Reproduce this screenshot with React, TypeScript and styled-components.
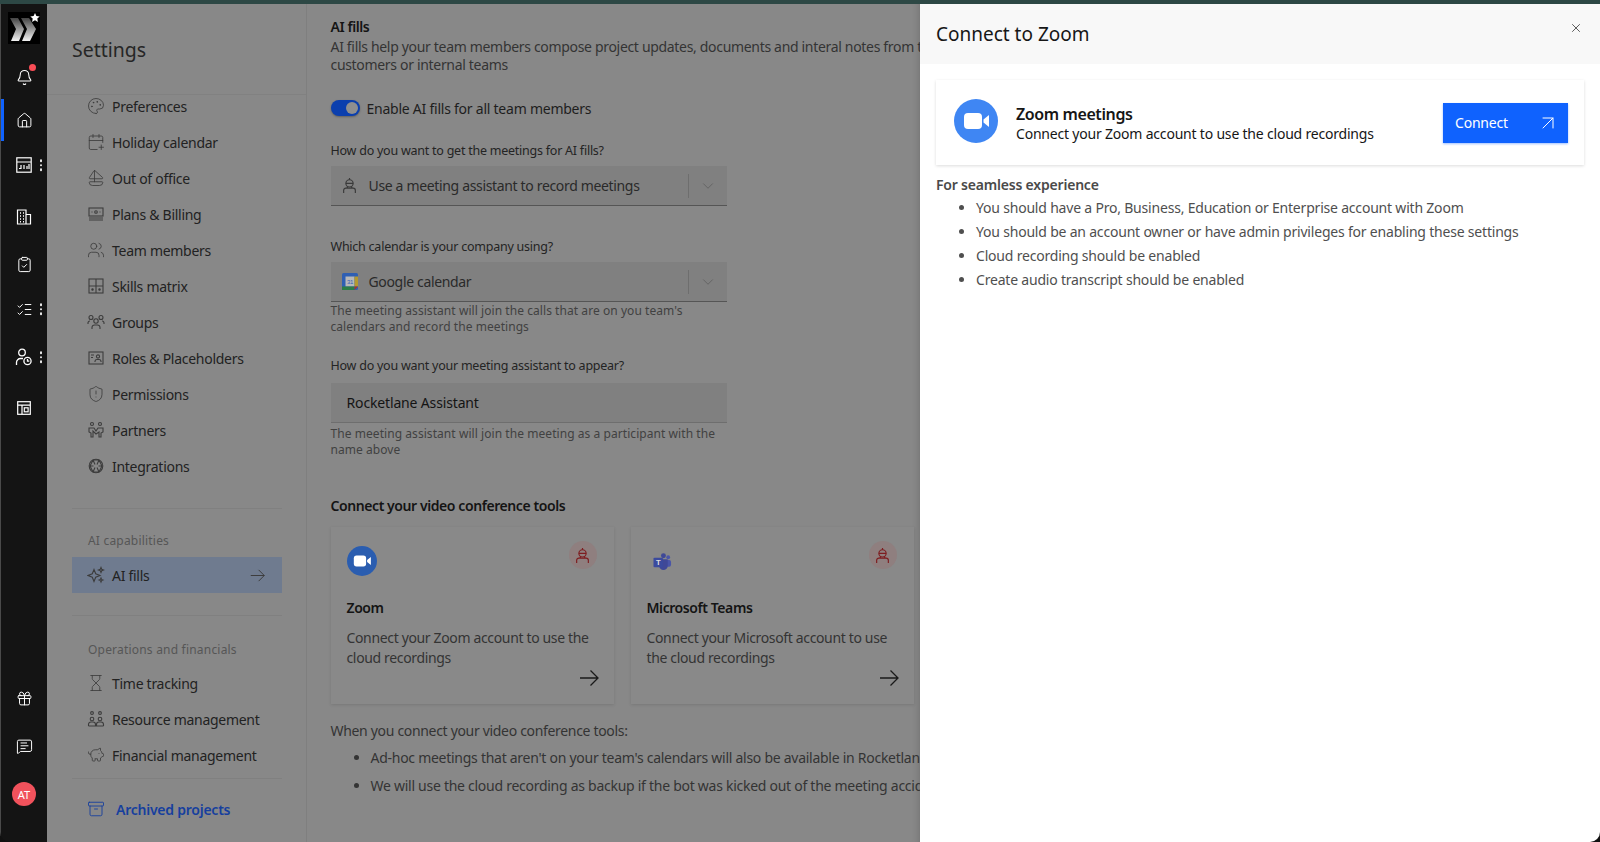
import styled, { createGlobalStyle } from 'styled-components'
import {
	Archive,
	ArrowUpRight,
	Bell,
	CalendarPlus,
	ChevronDown,
	ClipboardCheck,
	Gift,
	Hourglass,
	Home,
	ListChecks,
	MessageSquareText,
	Palette,
	PiggyBank,
	Sailboat,
	ShieldAlert,
	Users,
	X,
} from 'lucide-react'
import type { ReactNode } from 'react'

const GlobalStyle = createGlobalStyle`
	html, body {
		margin: 0;
		padding: 0;
		background: #111;
	}
	* {
		box-sizing: border-box;
	}
`

const Page = styled.div`
	width: 1600px;
	height: 842px;
	display: flex;
	flex-direction: column;
	overflow: hidden;
	border-radius: 0 0 10px 10px;
	font-family: 'Noto Sans', 'Liberation Sans', sans-serif;
	color: #1c1c1c;
`

const TopBand = styled.div`
	height: 4px;
	flex: none;
	background: #2d4845;
`

const Main = styled.div`
	flex: 1;
	display: flex;
	min-height: 0;
`

const Rail = styled.nav`
	width: 47px;
	flex: none;
	display: flex;
	flex-direction: column;
	background: #141414;
	border-left: 1px solid #4a4a4a;
	color: #fff;
`

const LogoBox = styled.div`
	height: 51px;
	padding: 8px 0 0 7px;
	flex: none;
`

const RailItem = styled.div<{ $h: number; $active?: boolean }>`
	position: relative;
	height: ${p => p.$h}px;
	flex: none;
	display: flex;
	align-items: center;
	justify-content: center;
	${p => p.$active && 'box-shadow: inset 3px 0 0 #0f62fe;'}
`

const RailBottom = styled.div`
	margin-top: auto;
	padding-bottom: 24px;
	display: flex;
	flex-direction: column;
`

const Kebab = styled.span`
	position: absolute;
	right: 5px;
	top: 50%;
	transform: translateY(-50%);
	display: flex;
	flex-direction: column;
	gap: 2px;

	i {
		width: 2.5px;
		height: 2.5px;
		border-radius: 50%;
		background: #eee;
	}
`

const RedDot = styled.span`
	position: absolute;
	top: 9px;
	left: 28px;
	width: 7px;
	height: 7px;
	border-radius: 50%;
	background: #fa4d56;
`

const Avatar = styled.div`
	width: 24px;
	height: 24px;
	border-radius: 50%;
	background: #f1525c;
	color: #fff;
	font-size: 11px;
	display: flex;
	align-items: center;
	justify-content: center;
`

const Sidebar = styled.aside`
	width: 260px;
	flex: none;
	display: flex;
	flex-direction: column;
	background: #888;
	border-right: 1px solid #7f7f7f;
	overflow: hidden;
`

const SidebarHeader = styled.div`
	position: relative;
	z-index: 1;
	height: 91px;
	flex: none;
	padding: 34px 0 0 25px;
	font-size: 19.5px;
	line-height: 24px;
	color: #262626;
	border-bottom: 1px solid #818181;
`

const NavList = styled.div`
	margin-top: -7px;
	display: flex;
	flex-direction: column;
`

const NavRow = styled.div<{ $active?: boolean }>`
	height: 36px;
	flex: none;
	margin: 0 24px 0 25px;
	padding: 0 17px 0 15px;
	display: flex;
	align-items: center;
	gap: 7px;
	font-size: 14px;
	letter-spacing: -0.28px;
	white-space: nowrap;
	color: #222;
	background: ${p => (p.$active ? '#6f7b8f' : 'transparent')};

	svg {
		flex: none;
		color: #3c3c3c;
	}
`

const NavArrow = styled.span`
	margin-left: auto;
	display: flex;
`

const SideDivider = styled.div<{ $top: number }>`
	height: 1px;
	flex: none;
	margin: ${p => p.$top}px 24px 0 25px;
	background: #808080;
`

const SectionLabel = styled.div<{ $top: number }>`
	margin: ${p => p.$top}px 0 0 41px;
	font-size: 12px;
	line-height: 16px;
	letter-spacing: 0.2px;
	color: #565656;
`

const NavGroup = styled.div<{ $top: number }>`
	margin-top: ${p => p.$top}px;
	display: flex;
	flex-direction: column;
`

const ArchivedRow = styled(NavRow)`
	gap: 11px;
	font-weight: 600;
	letter-spacing: -0.24px;
	color: #163f9e;

	svg {
		color: #163f9e;
	}
`

const Content = styled.main`
	flex: 1;
	min-width: 0;
	padding: 14px 0 0 23.5px;
	background: #888;
	overflow: hidden;
	box-shadow: inset -8px 0 8px -8px rgba(0, 0, 0, 0.2);
`

const Strong = styled.div<{ $top?: number }>`
	margin-top: ${p => p.$top ?? 0}px;
	font-size: 14px;
	line-height: 18px;
	font-weight: 600;
	letter-spacing: -0.42px;
	color: #141414;
`

const Description = styled.p<{ $top?: number }>`
	margin: ${p => p.$top ?? 2}px 0 0;
	font-size: 14px;
	line-height: 18px;
	letter-spacing: -0.32px;
	white-space: nowrap;
	color: #343434;
`

const ToggleRow = styled.div`
	margin-top: 26px;
	height: 16px;
	display: flex;
	align-items: center;
	gap: 7px;
	font-size: 14px;
	letter-spacing: -0.24px;
	color: #1e1e1e;
`

const Toggle = styled.span`
	position: relative;
	width: 29px;
	height: 16px;
	border-radius: 8px;
	background: #0b3fae;
	box-shadow: 0 1px 2px rgba(0, 0, 0, 0.3);

	&::after {
		content: '';
		position: absolute;
		top: 2px;
		right: 2px;
		width: 12px;
		height: 12px;
		border-radius: 50%;
		background: #8f8f8f;
	}
`

const FieldLabel = styled.div<{ $top: number }>`
	margin-top: ${p => p.$top}px;
	font-size: 12.5px;
	line-height: 16px;
	letter-spacing: -0.24px;
	color: #242424;
`

const Select = styled.div`
	margin-top: 7px;
	width: 396px;
	height: 40px;
	padding: 0 10px 0 10px;
	display: flex;
	align-items: center;
	gap: 10px;
	background: #808080;
	border-bottom: 1px solid #555;
	font-size: 14px;
	letter-spacing: -0.34px;
	color: #2a2a2a;
`

const SelectIcon = styled.span`
	width: 18px;
	display: flex;
	justify-content: center;
	color: #3a3a3a;
`

const SelectRule = styled.span`
	margin-left: auto;
	width: 1px;
	height: 24px;
	background: #6e6e6e;
`

const SelectChevron = styled(ChevronDown)`
	color: #5f5f5f;
`

const TextInput = styled.div`
	margin-top: 9px;
	width: 396px;
	height: 40px;
	padding: 0 16px;
	display: flex;
	align-items: center;
	background: #808080;
	border-bottom: 1px solid #6e6e6e;
	font-size: 14px;
	letter-spacing: -0.15px;
	color: #141414;
`

const Helper = styled.p<{ $top: number }>`
	margin: ${p => p.$top}px 0 0;
	width: 396px;
	font-size: 12px;
	line-height: 16px;
	letter-spacing: 0.06px;
	color: #414141;
`

const CardRow = styled.div`
	margin-top: 12px;
	display: flex;
	gap: 17px;
`

const ToolCard = styled.div`
	position: relative;
	width: 283px;
	height: 177px;
	flex: none;
	padding: 19px 15px 16px 16px;
	display: flex;
	flex-direction: column;
	background: #898989;
	box-shadow: 0 1px 3px rgba(0, 0, 0, 0.12);
`

const ToolIcon = styled.div<{ $inset?: number }>`
	height: 30px;
	flex: none;
	padding-left: ${p => p.$inset ?? 0}px;
	display: flex;
	align-items: center;
`

const ToolBadge = styled.span`
	position: absolute;
	top: 14px;
	right: 17px;
	width: 28px;
	height: 28px;
	border-radius: 50%;
	background: #8f7f7f;
	color: #7e1d20;
	display: flex;
	align-items: center;
	justify-content: center;
`

const ToolDescription = styled.p`
	margin: 11px 0 0;
	font-size: 14px;
	line-height: 20px;
	letter-spacing: -0.35px;
	color: #343434;
`

const ToolArrowBox = styled.div`
	align-self: flex-end;
	flex: none;
	height: 20px;
	color: #1a1a1a;
`

const ClippedList = styled.ul`
	margin: 4px 0 0;
	padding: 0 0 0 40px;
	list-style: disc;
	font-size: 14px;
	line-height: 28px;
	letter-spacing: -0.27px;
	white-space: nowrap;
	color: #343434;
`

const Drawer = styled.section`
	width: 680px;
	flex: none;
	display: flex;
	flex-direction: column;
	background: #fff;
`

const DrawerHeader = styled.header`
	height: 60px;
	flex: none;
	padding: 0 16px;
	display: flex;
	align-items: center;
	justify-content: space-between;
	background: #f8f8f8;
	font-size: 19px;
	color: #161616;
`

const CloseIcon = styled(X)`
	margin: -12px 1px 0 0;
	color: #2a2a2a;
`

const DrawerBody = styled.div`
	padding: 16px;
`

const ZoomCard = styled.div`
	height: 85px;
	padding: 0 16px 0 18px;
	display: flex;
	align-items: center;
	gap: 18px;
	background: #fff;
	box-shadow: 0 1px 3px rgba(0, 0, 0, 0.14);
`

const ZoomCircle = styled.div`
	width: 44px;
	height: 44px;
	flex: none;
	margin-top: -3px;
`

const ZoomText = styled.div`
	flex: 1;
`

const ZoomTitle = styled.div`
	font-size: 16px;
	line-height: 22px;
	font-weight: 600;
	letter-spacing: -0.4px;
	color: #161616;
`

const ZoomSub = styled.div`
	font-size: 14px;
	line-height: 18px;
	letter-spacing: -0.2px;
	color: #161616;
`

const ConnectButton = styled.button`
	width: 125px;
	height: 40px;
	padding: 0 8px 0 12px;
	display: flex;
	align-items: center;
	justify-content: space-between;
	border: 0;
	background: #0f62fe;
	color: #fff;
	font-family: inherit;
	font-size: 14px;
	letter-spacing: -0.2px;
	box-shadow: 0 1px 2px rgba(15, 98, 254, 0.4);
`

const SeamlessTitle = styled.div`
	margin-top: 11px;
	font-size: 14px;
	line-height: 18px;
	font-weight: 600;
	letter-spacing: -0.2px;
	color: #4a4a4a;
`

const SeamlessList = styled.ul`
	margin: 2px 0 0;
	padding: 0 0 0 40px;
	list-style: disc;
	font-size: 14px;
	line-height: 24.1px;
	letter-spacing: -0.2px;
	color: #4f4f4f;
`

const Logo = () => (
	<svg width="32" height="32" viewBox="0 0 32 32">
		<defs>
			<linearGradient id="chev" x1="0" y1="0" x2="0" y2="1">
				<stop offset="0" stopColor="#444" />
				<stop offset="1" stopColor="#f2f2f2" />
			</linearGradient>
		</defs>
		<rect width="32" height="32" fill="#000" />
		<path d="M2 6h8l6 11-5 12H3l5-12z" fill="url(#chev)" />
		<path d="M13 6h8l7 11-6 12h-8l5-12z" fill="url(#chev)" />
		<path
			d="M27 1l1.4 3 3.3.4-2.4 2.2.6 3.3-2.9-1.6-2.9 1.6.6-3.3-2.4-2.2 3.3-.4z"
			fill="#fff"
		/>
	</svg>
)

const CalendarChart = () => (
	<svg width="16" height="16" viewBox="0 0 16 16" fill="none" stroke="#fff" strokeWidth="1.2">
		<rect x="0.8" y="0.8" width="14.4" height="14.4" />
		<path d="M1 5h14M5 8v3.5H3M8 8v4M11 9v3M13 7v5" />
	</svg>
)

const BuildingIcon = () => (
	<svg width="16" height="16" viewBox="0 0 16 16" fill="none" stroke="#fff" strokeWidth="1.2">
		<path d="M1.5 1H10v14H1.5zM10 5.5h4.5V15H10" />
		<path d="M4 4h1M7 4h1M4 7h1M7 7h1M4 10h1M7 10h1M4 12.8h1M7 12.8h1" strokeWidth="1.4" />
	</svg>
)

const PersonClock = () => (
	<svg width="18" height="18" viewBox="0 0 18 18" fill="none" stroke="#fff" strokeWidth="1.3">
		<circle cx="7" cy="4.5" r="3.3" />
		<path d="M1.5 17v-2.5a4 4 0 0 1 4-4H8" />
		<circle cx="12.5" cy="13" r="3.6" />
		<path d="M12.5 11v2.2h1.8" />
	</svg>
)

const LayoutIcon = () => (
	<svg width="14" height="14" viewBox="0 0 14 14" fill="none" stroke="#fff" strokeWidth="1.2">
		<rect x="0.7" y="0.7" width="12.6" height="12.6" />
		<path d="M0.7 4.2h12.6M5 4.2v9.1" />
		<rect x="7.3" y="6.8" width="3.8" height="4" />
	</svg>
)

const NavSvg = ({ children }: { children: ReactNode }) => (
	<svg width="18" height="18" viewBox="0 0 18 18" fill="none" stroke="currentColor" strokeWidth="1.1">
		{children}
	</svg>
)

const BotIcon = ({ size = 17 }: { size?: number }) => (
	<svg width={size} height={size} viewBox="0 0 16 16" fill="none" stroke="currentColor" strokeWidth="1.1">
		<circle cx="8" cy="6" r="3.4" />
		<path d="M8 1v1.6M4.6 6h6.8M2.5 15v-2.5a2 2 0 0 1 2-2h7a2 2 0 0 1 2 2V15M5.5 10.5l.8-1.8M10.5 10.5l-.8-1.8" />
	</svg>
)

const LongArrow = ({ width }: { width: number }) => (
	<svg width={width} height={width} viewBox="0 0 20 20" fill="none" stroke="currentColor" strokeWidth="1.3">
		<path d="M1 10h18M11.5 2.5 19 10l-7.5 7.5" />
	</svg>
)

const GoogleCalendar = () => (
	<svg width="16" height="17" viewBox="0 0 16 17">
		<rect width="16" height="17" rx="1.5" fill="#2f5fb3" />
		<rect x="3.5" y="3.5" width="9" height="10" fill="#b8b8b8" />
		<rect x="12.5" y="3.5" width="3.5" height="10" fill="#b59a2e" />
		<rect y="13.5" width="12.5" height="3.5" fill="#2c7d46" />
		<path d="M12.5 13.5H16L12.5 17z" fill="#a8342b" />
		<text x="8" y="11" fontSize="6" textAnchor="middle" fill="#2f5fb3" fontFamily="Liberation Sans, sans-serif">
			31
		</text>
	</svg>
)

const ZoomGlyph = ({ size, bg }: { size: number; bg: string }) => (
	<svg width={size} height={size} viewBox="0 0 44 44">
		<circle cx="22" cy="22" r="22" fill={bg} />
		<rect x="10" y="14" width="18" height="16" rx="4" fill="#fff" />
		<path d="M29.5 20.5 35 16v12l-5.5-4.5z" fill="#fff" />
	</svg>
)

const TeamsGlyph = () => (
	<svg width="19" height="19" viewBox="0 0 20 20">
		<circle cx="16" cy="5.5" r="2" fill="#4a55a8" />
		<circle cx="11" cy="4" r="2.6" fill="#3f4897" />
		<rect x="13" y="8.5" width="6" height="7" rx="2" fill="#4a55a8" />
		<path d="M6.5 7.5h9v7a4.5 4.5 0 0 1-9 0z" fill="#3f4897" />
		<rect x="0.5" y="6" width="10" height="10" rx="1" fill="#3b4a9e" />
		<text x="5.5" y="13.8" fontSize="8" fontWeight="700" textAnchor="middle" fill="#ddd" fontFamily="Liberation Sans, sans-serif">
			T
		</text>
	</svg>
)

const navIcon = { size: 18, strokeWidth: 1.1 }

const mainNav: { label: string; icon: ReactNode }[] = [
	{ label: 'Preferences', icon: <Palette {...navIcon} /> },
	{ label: 'Holiday calendar', icon: <CalendarPlus {...navIcon} /> },
	{ label: 'Out of office', icon: <Sailboat {...navIcon} /> },
	{
		label: 'Plans & Billing',
		icon: (
			<NavSvg>
				<rect x="2" y="3" width="14" height="8" />
				<circle cx="9" cy="7" r="1.3" />
				<path d="M4.5 7h1M12.5 7h1M2 13h14M2 15h14" />
			</NavSvg>
		),
	},
	{ label: 'Team members', icon: <Users {...navIcon} /> },
	{
		label: 'Skills matrix',
		icon: (
			<NavSvg>
				<rect x="2" y="2" width="14" height="14" />
				<path d="M9 2v14M2 9h14" />
				<circle cx="5.5" cy="12.5" r="0.7" fill="currentColor" />
				<circle cx="12.5" cy="12.5" r="0.7" fill="currentColor" />
			</NavSvg>
		),
	},
	{
		label: 'Groups',
		icon: (
			<NavSvg>
				<circle cx="4" cy="4.5" r="2" />
				<circle cx="14" cy="4.5" r="2" />
				<circle cx="9" cy="8" r="2.2" />
				<path d="M1 11v-1a2 2 0 0 1 2-2M17 11v-1a2 2 0 0 0-2-2M5 16v-1.5A2.5 2.5 0 0 1 7.500 12h3a2.500 2.500 0 0 1 2.500 2.500V16" />
			</NavSvg>
		),
	},
	{
		label: 'Roles & Placeholders',
		icon: (
			<NavSvg>
				<rect x="2" y="3" width="14" height="12" />
				<circle cx="11" cy="7.5" r="1.6" />
				<path d="M8 13v-.8a2 2 0 0 1 2-1.7h2a2 2 0 0 1 2 1.700V13M4 6h3M4 8.500h2" />
			</NavSvg>
		),
	},
	{ label: 'Permissions', icon: <ShieldAlert {...navIcon} /> },
	{
		label: 'Partners',
		icon: (
			<NavSvg>
				<circle cx="5" cy="3" r="1.5" />
				<circle cx="13" cy="3" r="1.5" />
				<path d="M2 7h5l2 3 2-3h5v4l-2 1v4h-2v-5L9 13l-3-3v6H4v-4l-2-1z" />
			</NavSvg>
		),
	},
	{
		label: 'Integrations',
		icon: (
			<NavSvg>
				<circle cx="9" cy="9" r="6.8" />
				<path d="M6 3 3 9l3 6h6l3-6-3-6zM3 9h3.5M11.5 9H15M6 3l2 4.5M12 3l-2 4.5M6 15l2-4.5M12 15l-2-4.5" />
			</NavSvg>
		),
	},
]

const opsNav: { label: string; icon: ReactNode }[] = [
	{ label: 'Time tracking', icon: <Hourglass {...navIcon} /> },
	{
		label: 'Resource management',
		icon: (
			<NavSvg>
				<circle cx="5" cy="3" r="1.4" />
				<circle cx="13" cy="3" r="1.4" />
				<circle cx="5" cy="9" r="1.8" />
				<circle cx="13" cy="9" r="1.8" />
				<path d="M1.5 16v-1.5A2.500 2.500 0 0 1 4 12h2a2.500 2.500 0 0 1 2.500 2.500V16M9.500 16v-1.500A2.500 2.500 0 0 1 12 12h2a2.500 2.500 0 0 1 2.500 2.500V16M1.500 16h15" />
			</NavSvg>
		),
	},
	{ label: 'Financial management', icon: <PiggyBank {...navIcon} /> },
]

const tools = [
	{
		name: 'Zoom',
		text: 'Connect your Zoom account to use the cloud recordings',
		icon: <ZoomGlyph size={30} bg="#2a5db0" />,
		inset: 0,
	},
	{
		name: 'Microsoft Teams',
		text: 'Connect your Microsoft account to use the cloud recordings',
		icon: <TeamsGlyph />,
		inset: 6,
	},
]

export default function App() {
	return (
		<Page>
			<GlobalStyle />
			<TopBand />
			<Main>
				<Rail>
					<LogoBox>
						<Logo />
					</LogoBox>
					<RailItem $h={44}>
						<Bell size={17} strokeWidth={1.5} />
						<RedDot />
					</RailItem>
					<RailItem $h={42} $active>
						<Home size={17} strokeWidth={1.4} />
					</RailItem>
					<RailItem $h={48}>
						<CalendarChart />
						<Kebab>
							<i />
							<i />
							<i />
						</Kebab>
					</RailItem>
					<RailItem $h={56}>
						<BuildingIcon />
					</RailItem>
					<RailItem $h={38}>
						<ClipboardCheck size={17} strokeWidth={1.4} />
					</RailItem>
					<RailItem $h={52}>
						<ListChecks size={17} strokeWidth={1.4} />
						<Kebab>
							<i />
							<i />
							<i />
						</Kebab>
					</RailItem>
					<RailItem $h={44}>
						<PersonClock />
						<Kebab>
							<i />
							<i />
							<i />
						</Kebab>
					</RailItem>
					<RailItem $h={58}>
						<LayoutIcon />
					</RailItem>
					<RailBottom>
						<RailItem $h={48}>
							<Gift size={17} strokeWidth={1.4} />
						</RailItem>
						<RailItem $h={48}>
							<MessageSquareText size={17} strokeWidth={1.4} />
						</RailItem>
						<RailItem $h={48}>
							<Avatar>AT</Avatar>
						</RailItem>
					</RailBottom>
				</Rail>

				<Sidebar>
					<SidebarHeader>Settings</SidebarHeader>
					<NavList>
						{mainNav.map(item => (
							<NavRow key={item.label}>
								{item.icon}
								{item.label}
							</NavRow>
						))}
					</NavList>
					<SideDivider $top={24} />
					<SectionLabel $top={24}>AI capabilities</SectionLabel>
					<NavGroup $top={8}>
						<NavRow $active>
							<NavSvg>
								<path d="M7 3.5l1.7 4.3 4.3 1.700-4.300 1.700L7 15.500l-1.700-4.300L1 9.500l4.300-1.700z" />
								<path d="M14 1.500l.7 1.800 1.800.7-1.800.7-.7 1.800-.7-1.800-1.800-.7 1.800-.7zM14 12l.6 1.400 1.400.6-1.400.6-.6 1.400-.6-1.400-1.400-.6 1.400-.6z" />
							</NavSvg>
							AI fills
							<NavArrow>
								<LongArrow width={15} />
							</NavArrow>
						</NavRow>
					</NavGroup>
					<SideDivider $top={22} />
					<SectionLabel $top={26}>Operations and financials</SectionLabel>
					<NavGroup $top={7}>
						{opsNav.map(item => (
							<NavRow key={item.label}>
								{item.icon}
								{item.label}
							</NavRow>
						))}
					</NavGroup>
					<SideDivider $top={5} />
					<NavGroup $top={12}>
						<ArchivedRow>
							<Archive size={18} strokeWidth={1.2} />
							Archived projects
						</ArchivedRow>
					</NavGroup>
				</Sidebar>

				<Content>
					<Strong>AI fills</Strong>
					<Description>
						AI fills help your team members compose project updates, documents and interal notes from the
						<br />
						customers or internal teams
					</Description>
					<ToggleRow>
						<Toggle />
						Enable AI fills for all team members
					</ToggleRow>
					<FieldLabel $top={27}>How do you want to get the meetings for AI fills?</FieldLabel>
					<Select>
						<SelectIcon>
							<BotIcon />
						</SelectIcon>
						Use a meeting assistant to record meetings
						<SelectRule />
						<SelectChevron size={18} strokeWidth={1.1} />
					</Select>
					<FieldLabel $top={33}>Which calendar is your company using?</FieldLabel>
					<Select>
						<SelectIcon>
							<GoogleCalendar />
						</SelectIcon>
						Google calendar
						<SelectRule />
						<SelectChevron size={18} strokeWidth={1.1} />
					</Select>
					<Helper $top={1}>
						The meeting assistant will join the calls that are on you team's calendars and record the meetings
					</Helper>
					<FieldLabel $top={23}>How do you want your meeting assistant to appear?</FieldLabel>
					<TextInput>Rocketlane Assistant</TextInput>
					<Helper $top={3}>
						The meeting assistant will join the meeting as a participant with the name above
					</Helper>
					<Strong $top={39}>Connect your video conference tools</Strong>
					<CardRow>
						{tools.map(tool => (
							<ToolCard key={tool.name}>
								<ToolIcon $inset={tool.inset}>{tool.icon}</ToolIcon>
								<ToolBadge>
									<BotIcon />
								</ToolBadge>
								<Strong $top={23}>{tool.name}</Strong>
								<ToolDescription>{tool.text}</ToolDescription>
								<ToolArrowBox>
									<LongArrow width={20} />
								</ToolArrowBox>
							</ToolCard>
						))}
					</CardRow>
					<Description $top={18}>When you connect your video conference tools:</Description>
					<ClippedList>
						<li>Ad-hoc meetings that aren't on your team's calendars will also be available in Rocketlane</li>
						<li>We will use the cloud recording as backup if the bot was kicked out of the meeting accidentally</li>
					</ClippedList>
				</Content>

				<Drawer>
					<DrawerHeader>
						Connect to Zoom
						<CloseIcon size={14} strokeWidth={1.3} />
					</DrawerHeader>
					<DrawerBody>
						<ZoomCard>
							<ZoomCircle>
								<ZoomGlyph size={44} bg="#3f86f3" />
							</ZoomCircle>
							<ZoomText>
								<ZoomTitle>Zoom meetings</ZoomTitle>
								<ZoomSub>Connect your Zoom account to use the cloud recordings</ZoomSub>
							</ZoomText>
							<ConnectButton>
								Connect
								<ArrowUpRight size={24} strokeWidth={1} />
							</ConnectButton>
						</ZoomCard>
						<SeamlessTitle>For seamless experience</SeamlessTitle>
						<SeamlessList>
							<li>You should have a Pro, Business, Education or Enterprise account with Zoom</li>
							<li>You should be an account owner or have admin privileges for enabling these settings</li>
							<li>Cloud recording should be enabled</li>
							<li>Create audio transcript should be enabled</li>
						</SeamlessList>
					</DrawerBody>
				</Drawer>
			</Main>
		</Page>
	)
}
